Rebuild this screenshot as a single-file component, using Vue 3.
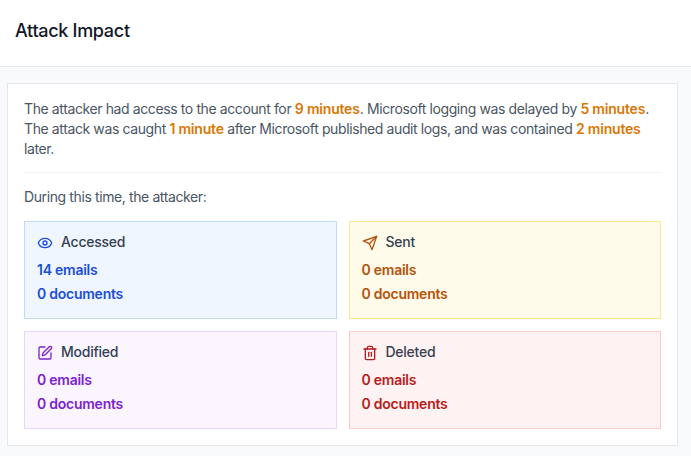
<script setup>
const cards = [
  { key: 'blue', title: 'Accessed', emails: 14, docs: 0, icon: 'eye' },
  { key: 'yellow', title: 'Sent', emails: 0, docs: 0, icon: 'send' },
  { key: 'purple', title: 'Modified', emails: 0, docs: 0, icon: 'edit' },
  { key: 'red', title: 'Deleted', emails: 0, docs: 0, icon: 'trash' },
]
</script>

<template>
  <div class="page">
    <header class="top"><h1>Attack Impact</h1></header>
    <main class="main">
      <section class="panel">
        <p class="lead">
          The attacker had access to the account for <b>9 minutes</b>. Microsoft logging was delayed by <b>5 minutes</b>.
          The attack was caught <b>1 minute</b> after Microsoft published audit logs, and was contained <b>2 minutes</b>
          later.
        </p>
        <div class="rule"></div>
        <p class="during">During this time, the attacker:</p>
        <div class="grid">
          <div v-for="c in cards" :key="c.key" class="card" :class="c.key">
            <div class="head">
              <svg class="icon" viewBox="0 0 24 24" fill="none" stroke="currentColor" stroke-width="2" stroke-linecap="round" stroke-linejoin="round">
                <template v-if="c.icon === 'eye'">
                  <path d="M2.06 12.35a1 1 0 0 1 0-.7 10.75 10.75 0 0 1 19.88 0 1 1 0 0 1 0 .7 10.75 10.75 0 0 1-19.88 0" />
                  <circle cx="12" cy="12" r="3" />
                </template>
                <template v-else-if="c.icon === 'send'">
                  <path d="m22 2-7 20-4-9-9-4Z" />
                  <path d="M22 2 11 13" />
                </template>
                <template v-else-if="c.icon === 'edit'">
                  <path d="M12 3H5a2 2 0 0 0-2 2v14a2 2 0 0 0 2 2h14a2 2 0 0 0 2-2v-7" />
                  <path d="M18.38 2.62a2.12 2.12 0 1 1 3 3L12.36 14.64a2 2 0 0 1-.85.5l-2.87.84a.5.5 0 0 1-.62-.62l.84-2.87a2 2 0 0 1 .5-.85z" />
                </template>
                <template v-else>
                  <path d="M3 6h18" />
                  <path d="M19 6v14a2 2 0 0 1-2 2H7a2 2 0 0 1-2-2V6" />
                  <path d="M8 6V4a2 2 0 0 1 2-2h4a2 2 0 0 1 2 2v2" />
                  <path d="M10 11v6" />
                  <path d="M14 11v6" />
                </template>
              </svg>
              <span class="title">{{ c.title }}</span>
            </div>
            <div class="stat">{{ c.emails }} emails</div>
            <div class="stat">{{ c.docs }} documents</div>
          </div>
        </div>
      </section>
    </main>
  </div>
</template>

<style>
html, body { margin: 0; background: #f9fafb; }
</style>

<style scoped>
.page {
  height: 456px;
  overflow: hidden;
  background: #f9fafb;
  font-family: Inter, "Liberation Sans", sans-serif;
  color: #4b5563;
  font-size: 14px;
  line-height: 20px;
  letter-spacing: -0.39px;
}
.top {
  height: 66px;
  box-sizing: content-box;
  display: flex;
  align-items: center;
  padding: 0 15px;
  background: #fff;
  border-bottom: 1px solid #e5e7eb;
}
h1 {
  margin: -4px 0 0;
  font-size: 18px;
  line-height: 28px;
  font-weight: 500;
  color: #111827;
  letter-spacing: -0.3px;
}
.main { padding: 16px 13px 0 7px; }
.panel {
  background: #fff;
  border: 1px solid #e5e7eb;
  padding: 15px 16px 16px;
}
.lead { margin: 0; }
.lead b { font-weight: 600; color: #d97706; letter-spacing: -0.2px; }
.rule { height: 1px; background: #f3f4f6; margin: 13px 0 14px; }
.during { margin: 0 0 14px; }
.grid {
  display: grid;
  grid-template-columns: 1fr 1fr;
  gap: 12px;
}
.card {
  height: 98px;
  box-sizing: border-box;
  border: 1px solid;
  padding: 10px 12px;
}
.head {
  display: flex;
  align-items: center;
  gap: 8px;
  height: 20px;
  margin-bottom: 8px;
}
.icon { width: 16px; height: 16px; flex: none; margin-top: 2px; }
.title { color: #374151; font-weight: 500; letter-spacing: -0.25px; }
.stat { font-weight: 600; height: 24px; line-height: 20px; letter-spacing: -0.25px; }
.blue { background: #eff6ff; border-color: #bfdbfe; }
.blue .icon, .blue .stat { color: #1d4ed8; }
.yellow { background: #fffbeb; border-color: #fde68a; }
.yellow .icon, .yellow .stat { color: #b45309; }
.purple { background: #faf5ff; border-color: #e9d5ff; }
.purple .icon, .purple .stat { color: #7e22ce; }
.red { background: #fef2f2; border-color: #fecaca; }
.red .icon, .red .stat { color: #b91c1c; }
</style>
